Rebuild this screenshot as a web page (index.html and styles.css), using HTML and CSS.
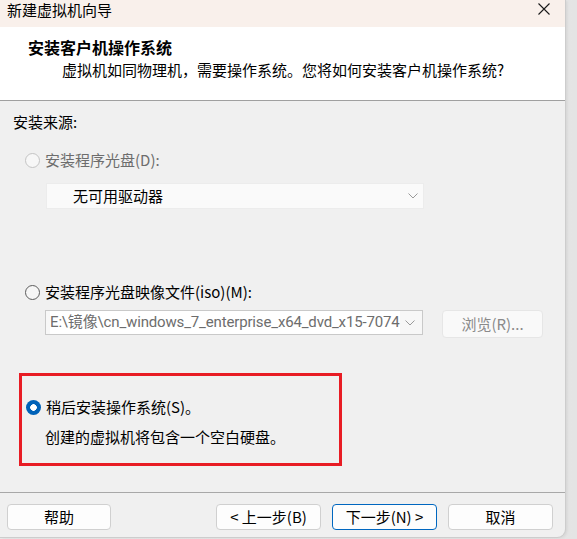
FILE: index.html
```html
<!DOCTYPE html>
<html lang="zh-CN">
<head>
<meta charset="utf-8">
<title>新建虚拟机向导</title>
<link rel="stylesheet" href="styles.css">
</head>
<body>
<div class="window">
  <div class="titlebar">
    <span class="title">新建虚拟机向导</span>
    <svg class="close" width="12" height="12" viewBox="0 0 12 12"><path d="M0.5 0.5L11.5 11.5M11.5 0.5L0.5 11.5" stroke="#1a1a1a" stroke-width="1.1" fill="none"/></svg>
  </div>
  <div class="header">
    <div class="h-title">安装客户机操作系统</div>
    <div class="h-sub">虚拟机如同物理机，需要操作系统。您将如何安装客户机操作系统?</div>
  </div>
  <div class="content">
    <div class="section-label">安装来源:</div>
    <div class="option option-first disabled"><span class="radio"></span><span>安装程序光盘(D):</span></div>
    <div class="combo combo-drive">
      <span class="combo-text">无可用驱动器</span>
      <svg class="chev" width="10" height="6" viewBox="0 0 10 6"><path d="M0.5 0.5L5 5L9.5 0.5" stroke="#9a9a9a" stroke-width="1" fill="none"/></svg>
    </div>
    <div class="option option-iso"><span class="radio"></span><span>安装程序光盘映像文件(iso)(M):</span></div>
    <div class="iso-row">
      <div class="combo combo-iso">
        <span class="combo-text iso-text">E:\镜像\cn_windows_7_enterprise_x64_dvd_x15-7074</span>
        <svg class="chev" width="10" height="6" viewBox="0 0 10 6"><path d="M0.5 0.5L5 5L9.5 0.5" stroke="#9a9a9a" stroke-width="1" fill="none"/></svg>
      </div>
      <button class="btn btn-browse" disabled>浏览(R)...</button>
    </div>
    <div class="highlight">
      <div class="option"><span class="radio checked"></span><span>稍后安装操作系统(S)。</span></div>
      <div class="note">创建的虚拟机将包含一个空白硬盘。</div>
    </div>
  </div>
  <div class="footer">
    <button class="btn btn-help">帮助</button>
    <div class="nav">
      <button class="btn">&lt; 上一步(B)</button>
      <button class="btn btn-primary">下一步(N) &gt;</button>
      <button class="btn">取消</button>
    </div>
  </div>
</div>
</body>
</html>
```
FILE: styles.css
```css
* { box-sizing: border-box; }
html, body { margin: 0; padding: 0; }
body {
  width: 577px;
  height: 539px;
  background: linear-gradient(to right, #e9e9e9, #e4e4e4);
  font-family: "Noto Sans CJK SC", sans-serif;
  font-size: 15px;
  line-height: 20px;
  color: #000;
  overflow: hidden;
}
.window {
  width: 565px;
  height: 537px;
  background: #f0f0f0;
  border-bottom-right-radius: 8px;
  box-shadow: 1px 0 0 #cdcdcd, 0 1px 0 #cdcdcd, 2px 1px 3px rgba(0,0,0,0.08);
  display: flex;
  flex-direction: column;
  overflow: hidden;
}
.titlebar {
  height: 27px;
  flex: none;
  background: #f9f0eb;
  display: flex;
  align-items: flex-start;
  justify-content: space-between;
  padding: 0 15px 0 7px;
}
.title { line-height: 20px; }
.close { margin-top: 3px; }
.header {
  height: 74px;
  flex: none;
  background: #fff;
  border-bottom: 1px solid #a0a0a0;
  padding: 10px 0 0 28px;
}
.h-title { font-weight: bold; font-size: 16px; }
.h-sub { margin: 3px 0 0 34px; }
.content {
  flex: 1;
  padding-left: 13px;
  display: flex;
  flex-direction: column;
  align-items: flex-start;
}
.section-label { margin-top: 11px; }
.option {
  display: flex;
  align-items: center;
  gap: 5px;
  height: 20px;
  margin-left: 12px;
}
.option-first { margin-top: 18px; }
.option-iso { margin-top: 73px; }
.disabled { color: #6d6d6d; }
.radio {
  width: 15px;
  height: 15px;
  border-radius: 50%;
  border: 1px solid #5c5c5c;
  background: #f6f6f6;
  flex: none;
}
.disabled .radio { border-color: #c4c4c4; background: #f7f7f7; }
.radio.checked {
  border: none;
  background: radial-gradient(circle, #fff 0 3px, #0062b8 3.6px);
}
.combo {
  display: flex;
  align-items: center;
  justify-content: space-between;
  width: 378px;
  margin-left: 33px;
}
.combo-drive {
  height: 26px;
  margin-top: 13px;
  background: #fafafa;
  border: 1px solid #ececec;
  padding: 0 5px 0 26px;
}
.iso-row {
  display: flex;
  align-items: flex-start;
  gap: 19px;
  margin: 8px 0 0 32px;
}
.combo-iso {
  margin-left: 0;
  height: 25px;
  background: #f7f7f7;
  border: 1px solid #c9c9c9;
  padding: 0 7px 0 4px;
}
.combo-text { white-space: nowrap; }
.iso-text {
  font-family: Roboto, "Noto Sans CJK SC", sans-serif;
  letter-spacing: -0.15px;
  color: #6d6d6d;
  background: #fff;
  height: 23px;
  line-height: 23px;
}
.chev { flex: none; }
.btn {
  font-family: inherit;
  font-size: 15px;
  line-height: 20px;
  color: #000;
  height: 26px;
  width: 105px;
  padding: 0;
  background: #fdfdfd;
  border: 1px solid #d0d0d0;
  border-radius: 4px;
}
.btn-browse {
  width: 101px;
  height: 28px;
  color: #8a8a8a;
  background: #f9f9f9;
  border-color: #e6e6e6;
}
.btn-primary { border-color: #0067c0; }
.highlight {
  margin: 35px 0 0 6px;
  width: 323px;
  height: 93px;
  border: 3px solid #e81c24;
  padding: 21px 0 0 4px;
}
.highlight .option { margin-left: 0; }
.note { margin: 10px 0 0 19px; }
.footer {
  height: 45px;
  flex: none;
  border-top: 1px solid #a8a8a8;
  display: flex;
  justify-content: space-between;
  align-items: flex-start;
  padding: 11px 12px 0 7px;
}
.btn-help { width: 104px; }
.nav { display: flex; gap: 11px; }
```
